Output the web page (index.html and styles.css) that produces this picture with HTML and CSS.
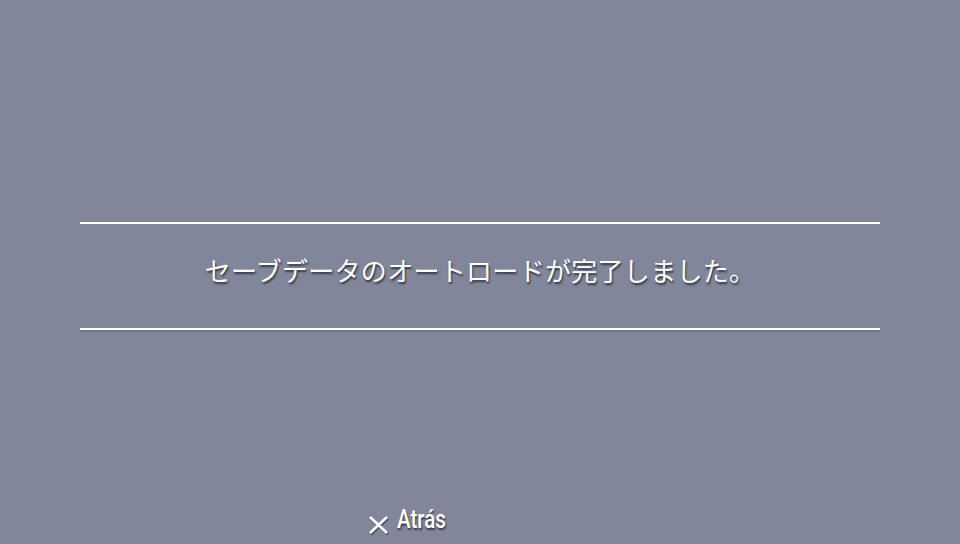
FILE: index.html
```html
<!DOCTYPE html>
<html lang="ja">
<head>
<meta charset="utf-8">
<link rel="stylesheet" href="styles.css">
</head>
<body>
<div class="screen">
  <div class="dialog">
    <div class="rule"></div>
    <p class="message">セーブデータのオートロードが完了しました。</p>
    <div class="rule rule-bottom"></div>
  </div>
  <div class="footer">
    <div class="action">
      <svg class="cross" viewBox="0 0 22 21" width="22" height="21"><path d="M2 2 L19 18 M19 2 L2 18" stroke="#1e2028" stroke-width="2.6" transform="translate(1,1.5)" opacity="0.5"/><path d="M2 2 L19 18 M19 2 L2 18" stroke="#ffffff" stroke-width="2.6"/></svg>
      <span class="label">Atrás</span>
    </div>
  </div>
</div>
</body>
</html>
```
FILE: styles.css
```css
html, body {
  margin: 0;
  padding: 0;
  width: 960px;
  height: 544px;
  overflow: hidden;
  background: #82869a;
}
.screen {
  width: 960px;
  height: 544px;
  display: flex;
  flex-direction: column;
  font-family: "Noto Sans CJK JP", "Noto Sans", sans-serif;
}
.dialog {
  margin: 222px 80px 0 80px;
  display: flex;
  flex-direction: column;
}
.rule {
  height: 2px;
  background: #ffffff;
}
.rule-bottom {
  box-shadow: 0 2px 1px rgba(60, 62, 80, 0.25);
}
.message {
  margin: 0;
  height: 104px;
  display: flex;
  align-items: center;
  justify-content: center;
  padding-bottom: 14px;
  box-sizing: border-box;
  color: #ffffff;
  font-size: 26px;
  letter-spacing: 0.3px;
  text-shadow: 1px 2px 2px rgba(25, 27, 35, 0.75);
}
.footer {
  margin-top: auto;
  height: 44px;
  display: flex;
  padding-left: 368px;
}
.action {
  display: flex;
  align-items: flex-start;
  gap: 7px;
}
.cross {
  margin-top: 15px;
}
.label {
  margin-top: 4px;
  color: #ffffff;
  font-family: Roboto, "Noto Sans", sans-serif;
  font-size: 26px;
  line-height: 30px;
  font-weight: 500;
  display: inline-block;
  transform: scaleX(0.79);
  transform-origin: left center;
  text-shadow: 1px 2px 2px rgba(25, 27, 35, 0.7);
}
```
